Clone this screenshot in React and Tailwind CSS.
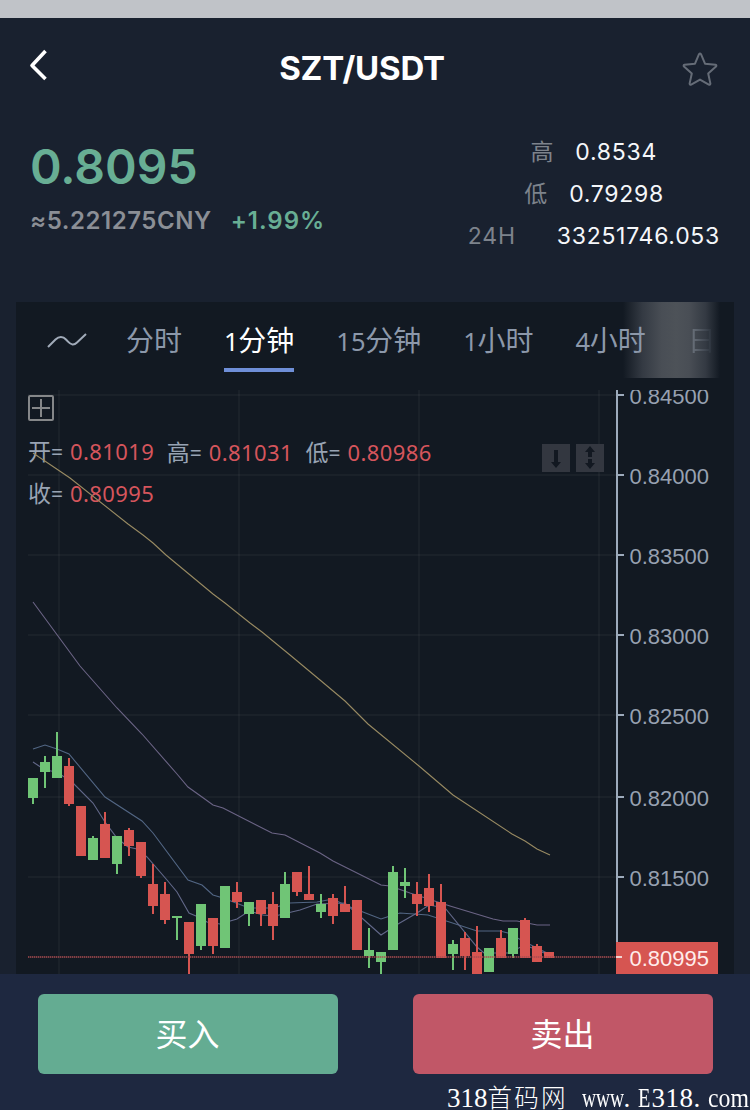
import React from "react";

const UP = "#70c576";
const DOWN = "#d65551";

// [rising, high, bodyTop, bodyBottom, low] in page-space y values
const CANDLES = [
  [1, 778, 778, 798, 804], [1, 756, 762, 772, 788], [1, 732, 756, 778, 778],
  [0, 758, 766, 804, 806], [0, 806, 806, 856, 856], [1, 836, 838, 860, 860],
  [0, 812, 824, 858, 858], [1, 836, 836, 864, 874], [0, 828, 830, 846, 856],
  [0, 842, 842, 876, 878], [0, 864, 884, 906, 914], [0, 882, 894, 920, 924],
  [1, 916, 916, 918, 940], [0, 922, 922, 954, 974], [1, 904, 904, 946, 950],
  [0, 918, 918, 946, 954], [1, 886, 886, 948, 948], [0, 882, 892, 902, 908],
  [1, 902, 902, 914, 926], [0, 900, 900, 914, 926], [0, 892, 904, 926, 940],
  [1, 872, 884, 918, 918], [0, 872, 872, 892, 896], [0, 866, 894, 900, 900],
  [1, 894, 904, 912, 918], [0, 894, 898, 916, 924], [0, 886, 904, 912, 912],
  [0, 900, 900, 950, 950], [1, 928, 950, 956, 968], [1, 952, 952, 962, 974],
  [1, 866, 872, 950, 950], [1, 868, 882, 886, 898], [0, 882, 894, 904, 916],
  [0, 874, 888, 906, 912], [0, 884, 902, 958, 958], [1, 940, 944, 954, 970],
  [0, 932, 938, 956, 970], [0, 926, 952, 974, 974], [1, 948, 948, 972, 972],
  [0, 930, 938, 958, 958], [1, 928, 928, 954, 958], [0, 918, 920, 958, 958],
  [0, 944, 946, 962, 962], [0, 952, 952, 958, 958],
];

const LINES = [
  ["#988a62", "33,453 70,478 128,524 143,535 153,543 166,555 213,594 225,603 250,623 262,632 290,655 320,680 345,701 368,724 419,766 453,795 512,834 525,841 537,849 550,855"],
  ["#6b6485", "33,602 80,666 117,708 142,734 177,774 188,787 202,797 213,805 223,808 272,833 285,835 320,853 333,861 381,885 390,886 410,893 450,906 493,919 503,921 517,921 537,925 550,925"],
  ["#526684", "33,749 45,745 57,749 69,754 105,797 142,821 153,833 188,880 202,885 213,895 223,898 249,908 273,908 290,903 317,902 333,899 345,905 363,912 381,919 390,916 400,913 428,915 477,931 500,931 508,933 525,942 549,954"],
  ["#626889", "33,762 45,770 57,772 73,783 93,803 105,822 117,838 128,847 137,849 147,857 167,880 177,892 189,913 196,916 207,922 220,924 237,919 249,911 263,915 275,916 300,910 317,904 345,903 355,912 363,919 381,935 398,924 417,913 429,905 445,908 477,947 484,953 508,953 525,945 549,955"],
];

const PRICES = [
  [395, "0.84500"], [475, "0.84000"], [555, "0.83500"], [635, "0.83000"],
  [715, "0.82500"], [797, "0.82000"], [877, "0.81500"],
];

function Chart() {
  return (
    <svg viewBox="16 390 718 584" className="relative block h-[584px] w-[718px]">
      <g fill="#fff" fillOpacity="0.035">
        {[58, 238, 418, 598].map((x) => <rect key={x} x={x} y="390" width="2" height="584" />)}
        {PRICES.map(([y]) => <rect key={y} x="28" y={y - 1} width="588" height="2" />)}
      </g>
      {LINES.map(([c, pts]) => (
        <polyline key={c} points={pts} fill="none" stroke={c} strokeWidth="1.1" />
      ))}
      {CANDLES.map(([up, high, top, bottom, low], i) => (
        <g key={i} fill={up ? UP : DOWN}>
          <rect x={32 + i * 12} y={high} width="2" height={low - high} />
          <rect x={28 + i * 12} y={top} width="10" height={bottom - top} />
        </g>
      ))}
      <path d="M28 957H616" stroke="#a84c50" strokeWidth="1.6" strokeDasharray="1.4 0.6" />
      <rect x="616" y="390" width="2" height="584" fill="#9dabbc" />
      {PRICES.map(([y, label]) => (
        <g key={y}>
          <rect x="616" y={y - 1} width="8" height="2" fill="#9dabbc" />
          <text x="629.5" y={y + 9.3} fontSize="22" fill="#97a1b1" fontFamily="Liberation Sans, sans-serif">{label}</text>
        </g>
      ))}
      <rect x="616" y="942" width="102" height="32" fill={DOWN} />
      <rect x="616" y="956" width="6" height="2" fill="#f1d5d3" />
      <text x="629.5" y="966.3" fontSize="22" fill="#ffeceb" fontFamily="Liberation Sans, sans-serif">0.80995</text>
    </svg>
  );
}

function Tab({ n, label, active }) {
  return (
    <div className={`relative flex h-[76px] shrink-0 items-baseline pt-[18px] ${active ? "text-white" : "text-[#8c98aa]"}`}>
      {n && <span className="-mr-[0.300px] font-['Noto_Sans'] text-[25.500px] leading-[42px]">{n}</span>}
      <span className="text-[28px] leading-[42px]">{label}</span>
      {active && <i className="absolute inset-x-0 top-[66px] h-1 bg-[#6f8fd8]" />}
    </div>
  );
}

function Quote({ label, value, className = "" }) {
  return (
    <div className={`flex items-baseline leading-[42px] ${className}`}>
      <span className="tracking-[0.8px] text-[#7d838c]">{label}</span>
      <span className="tracking-[0.72px] text-[#f5f7fa]">{value}</span>
    </div>
  );
}

function Ohlc({ label, value }) {
  return (
    <div className="flex items-baseline">
      <span className="text-[23px] text-[#98a3b3]">{label}</span>
      <span className="font-['Noto_Sans'] text-[21px] text-[#98a3b3]">=</span>
      <span className="ml-[7px] font-['Noto_Sans'] text-[22px] tracking-[0.4px] text-[#d5555c]">{value}</span>
    </div>
  );
}

export default function App() {
  return (
    <div className="relative flex h-[1110px] w-[750px] flex-col overflow-hidden bg-[#19212f] font-['Inter','Noto_Sans_CJK_SC',sans-serif]">
      <div className="h-[18px] shrink-0 bg-[#c0c3c8]" />
      <header className="flex h-[102px] shrink-0 items-center justify-between pr-[32px] pl-[29px]">
        <svg viewBox="0 0 20 32" className="-mt-[8px] h-8 w-5" fill="none" stroke="#fff" strokeWidth="3.6">
          <path d="M16.500 2 3 16.500l13.500 13.500" strokeLinejoin="round" />
        </svg>
        <h1 className="mr-[7px] text-[33px] font-bold tracking-[-0.2px] text-white">SZT/USDT</h1>
        <svg viewBox="0 0 36 36" className="h-9 w-9" fill="none" stroke="#656c77" strokeWidth="2" strokeLinejoin="round">
          <path d="M17 3.200q1-1.600 2 0l4 9.500 10.500 1.100q1.500.6.500 1.800l-7.800 6.900 2.200 10.100q-.2 1.500-1.600 1L18 28.600l-8.800 5q-1.400.5-1.600-1l2.200-10.100L2 15.600q-1-1.200.5-1.800L13 12.700Z" />
        </svg>
      </header>

      <section className="flex h-[182px] shrink-0 justify-between px-[30px]">
        <div>
          <div className="mt-[17px] text-[48px] leading-[60px] font-semibold text-[#68ae94]">0.8095</div>
          <div className="mt-[8px] flex gap-[19px] text-[24px] leading-[32px] font-semibold">
            <span className="tracking-[0.550px] text-[#8b8f96]">≈5.221275CNY</span>
            <span className="tracking-[1px] text-[#68ae94]">+1.99%</span>
          </div>
        </div>
        <div className="mt-[11px] flex flex-col items-end text-[23px]">
          <Quote label="高" value="0.8534" className="gap-[21px] pr-[63px]" />
          <Quote label="低" value="0.79298" className="gap-[21px] pr-[56px]" />
          <Quote label="24H" value="33251746.053" className="gap-[41px]" />
        </div>
      </section>

      <main className="mx-4 flex h-[672px] shrink-0 flex-col bg-[#121922]">
        <nav className="relative mb-3 flex h-[76px] gap-[42px] pl-[31px]">
          <i className="absolute top-0 left-[607px] h-[76px] w-[97px] bg-[linear-gradient(to_right,transparent,#343a43_20%,#494e55_40%,#4d5258_55%,#494e55_68%,#343a43_85%,transparent)]" />
          <svg viewBox="0 0 40 20" className="mt-[29px] -mr-[3px] h-5 w-10 shrink-0" fill="none" stroke="#a1abb9" strokeWidth="2">
            <path d="M1 16 8.500 8.500C12 5 16 5 19 8.500l2 2.200c3 3.300 6 3.600 9 .8L39 3" />
          </svg>
          <Tab label="分时" />
          <Tab n="1" label="分钟" active />
          <Tab n="15" label="分钟" />
          <Tab n="1" label="小时" />
          <Tab n="4" label="小时" />
          <div className="relative h-[76px] w-[28px] shrink-0 bg-linear-to-r from-[#7b838e] from-20% to-[#2b323c] to-90% bg-clip-text pt-[18px] text-[28px] leading-[42px] text-transparent opacity-60">日</div>
        </nav>
        <div className="relative h-[584px]">
          <div className="absolute top-[42px] left-[12px] flex flex-col">
            <div className="flex h-[42px] items-center gap-[12.500px]">
              <div className="-mt-[2px]"><Ohlc label="开" value="0.81019" /></div>
              <Ohlc label="高" value="0.81031" />
              <Ohlc label="低" value="0.80986" />
            </div>
            <div className="-mt-px flex h-[42px] items-center">
              <Ohlc label="收" value="0.80995" />
            </div>
          </div>
          <Chart />
          <svg viewBox="0 0 26 26" className="absolute top-[5px] left-[12px] h-[26px] w-[26px]" fill="none" stroke="#858789" strokeWidth="2">
            <rect x="1" y="1" width="24" height="24" rx="1" />
            <path d="M13 4v18M4 13h18" />
          </svg>
          <div className="absolute top-[54px] left-[526px] flex gap-[6px]">
            <svg viewBox="0 0 28 28" className="h-7 w-7 bg-[#333740]" fill="#121821">
              <path d="M12 6h4v12h3l-5 6-5-6h3z" />
            </svg>
            <svg viewBox="0 0 28 28" className="h-7 w-7 bg-[#333740]" fill="#121821">
              <path d="m14 2 5 6h-3v5h-4V8H9zM12 15h4v4h3l-5 6-5-6h3z" />
            </svg>
          </div>
        </div>
      </main>

      <footer className="flex h-[136px] shrink-0 justify-between bg-[#1e2840] px-[37.500px] pt-5">
        <button className="h-20 w-[300px] rounded-[6px] bg-[#64ac92] pt-px text-[32px] text-white">买入</button>
        <button className="h-20 w-[300px] rounded-[6px] bg-[#c15767] pt-px text-[32px] text-white">卖出</button>
      </footer>

      <div className="absolute top-[1080px] left-[447px] flex h-[30px] items-baseline font-['Liberation_Serif','Noto_Sans_CJK_SC',serif] text-[27px] leading-[36px] whitespace-nowrap text-white">
        <span>318</span>
        <span className="text-[24.500px] font-light tracking-[2.200px]">首码网</span>
        <span className="ml-[14px] w-[42px]"><span className="inline-block origin-left scale-x-[0.72]">www</span></span>
        <span className="w-[14px]">.</span>
        <span className="w-[14px]"><span className="inline-block origin-left scale-x-[0.75]">E</span></span>
        <span className="w-[42px] tracking-[0.500px]">318</span>
        <span className="w-[14px]">.</span>
        <span className="w-[42px]"><span className="inline-block origin-left scale-x-[0.88]">com</span></span>
      </div>
    </div>
  );
}
